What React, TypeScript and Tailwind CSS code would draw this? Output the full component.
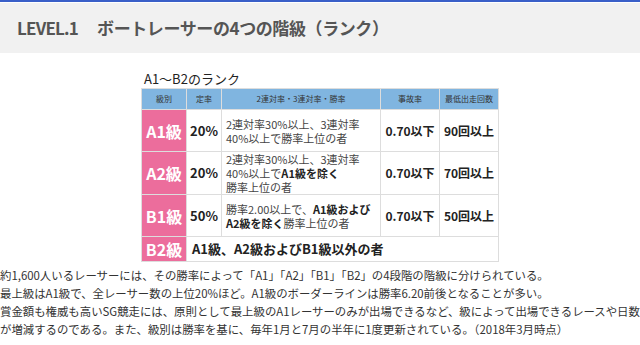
const font = { fontFamily: '"Noto Sans CJK JP", "Noto Sans", sans-serif' };

type Row = {
  grade: string;
  rate: string;
  desc: React.ReactNode;
  accident: string;
  min: string;
  h: string;
};

const rows: Row[] = [
  {
    grade: 'A1級',
    rate: '20%',
    desc: <>2連対率30%以上、3連対率<br />40%以上で勝率上位の者</>,
    accident: '0.70以下',
    min: '90回以上',
    h: 'h-[42px]',
  },
  {
    grade: 'A2級',
    rate: '20%',
    desc: (
      <>
        2連対率30%以上、3連対率<br />40%以上で<b className="font-bold text-[#222]">A1級を除く</b><br />勝率上位の者
      </>
    ),
    accident: '0.70以下',
    min: '70回以上',
    h: 'h-[43px]',
  },
  {
    grade: 'B1級',
    rate: '50%',
    desc: (
      <>
        勝率2.00以上で、<b className="font-bold text-[#222]">A1級および</b><br />
        <b className="font-bold text-[#222]">A2級を除く</b>勝率上位の者
      </>
    ),
    accident: '0.70以下',
    min: '50回以上',
    h: 'h-[42px]',
  },
];

export default function App() {
  return (
    <div className="w-[640px] h-[345px] overflow-hidden bg-white text-[#333]" style={font}>
      {/* heading bar */}
      <div className="border-t-[2px] border-[#3a5fc8]">
        <div className="h-[50px] mt-[1px] bg-[#f1f1f1] flex items-center pl-[17px]">
          <h1 className="text-[17px] font-semibold text-[#555] tracking-[-0.4px]">
            <span className="tracking-[-0.8px]">LEVEL.1</span>
            <span className="inline-block w-[19px]" />ボートレーサーの4つの階級（ランク）
          </h1>
        </div>
      </div>

      {/* table */}
      <div className="pl-[141px] pt-[17px]">
        <div className="text-[13px] leading-[18px] text-[#222] pl-[3px]">A1〜B2のランク</div>
        <table className="border-collapse w-[357px] table-fixed">
          <colgroup>
            <col className="w-[45px]" />
            <col className="w-[35px]" />
            <col className="w-[159px]" />
            <col className="w-[59px]" />
            <col className="w-[59px]" />
          </colgroup>
          <thead>
            <tr className="h-[21px] bg-[#80b5e0] text-[8px] text-[#333]">
              <th className="border border-[#ddd] font-normal">級別</th>
              <th className="border border-[#ddd] font-normal">定率</th>
              <th className="border border-[#ddd] font-normal">2連対率・3連対率・勝率</th>
              <th className="border border-[#ddd] font-normal">事故率</th>
              <th className="border border-[#ddd] font-normal">最低出走回数</th>
            </tr>
          </thead>
          <tbody>
            {rows.map((r) => (
              <tr key={r.grade} className={r.h}>
                <td className="border border-[#ddd] bg-[#ec6d9c] text-white font-bold text-[16px] text-center">
                  {r.grade}
                </td>
                <td className="border border-[#ddd] font-bold text-[13px] text-[#222] text-center">{r.rate}</td>
                <td className="border border-[#ddd] text-[11px] leading-[14px] text-[#444] pl-[4px]">{r.desc}</td>
                <td className="border border-[#ddd] font-bold text-[12px] text-[#222] text-center">{r.accident}</td>
                <td className="border border-[#ddd] font-bold text-[12px] text-[#222] text-center">{r.min}</td>
              </tr>
            ))}
            <tr className="h-[21px]">
              <td className="border border-[#ddd] bg-[#ec6d9c] text-white font-bold text-[16px] text-center">B2級</td>
              <td colSpan={4} className="border border-[#ddd] font-bold text-[13px] text-[#222] pl-[5px]">
                A1級、A2級およびB1級以外の者
              </td>
            </tr>
          </tbody>
        </table>
      </div>

      {/* body text */}
      <div className="pt-[4px] text-[11.4px] leading-[18px] text-[#333]">
        <p>約1,600人いるレーサーには、その勝率によって「A1」「A2」「B1」「B2」の4段階の階級に分けられている。</p>
        <p>最上級はA1級で、全レーサー数の上位20%ほど。A1級のボーダーラインは勝率6.20前後となることが多い。</p>
        <p>
          賞金額も権威も高いSG競走には、原則として最上級のA1レーサーのみが出場できるなど、級によって出場できるレースや日数が増減するのである。また、級別は勝率を基に、毎年1月と7月の半年に1度更新されている。（2018年3月時点）
        </p>
      </div>
    </div>
  );
}
